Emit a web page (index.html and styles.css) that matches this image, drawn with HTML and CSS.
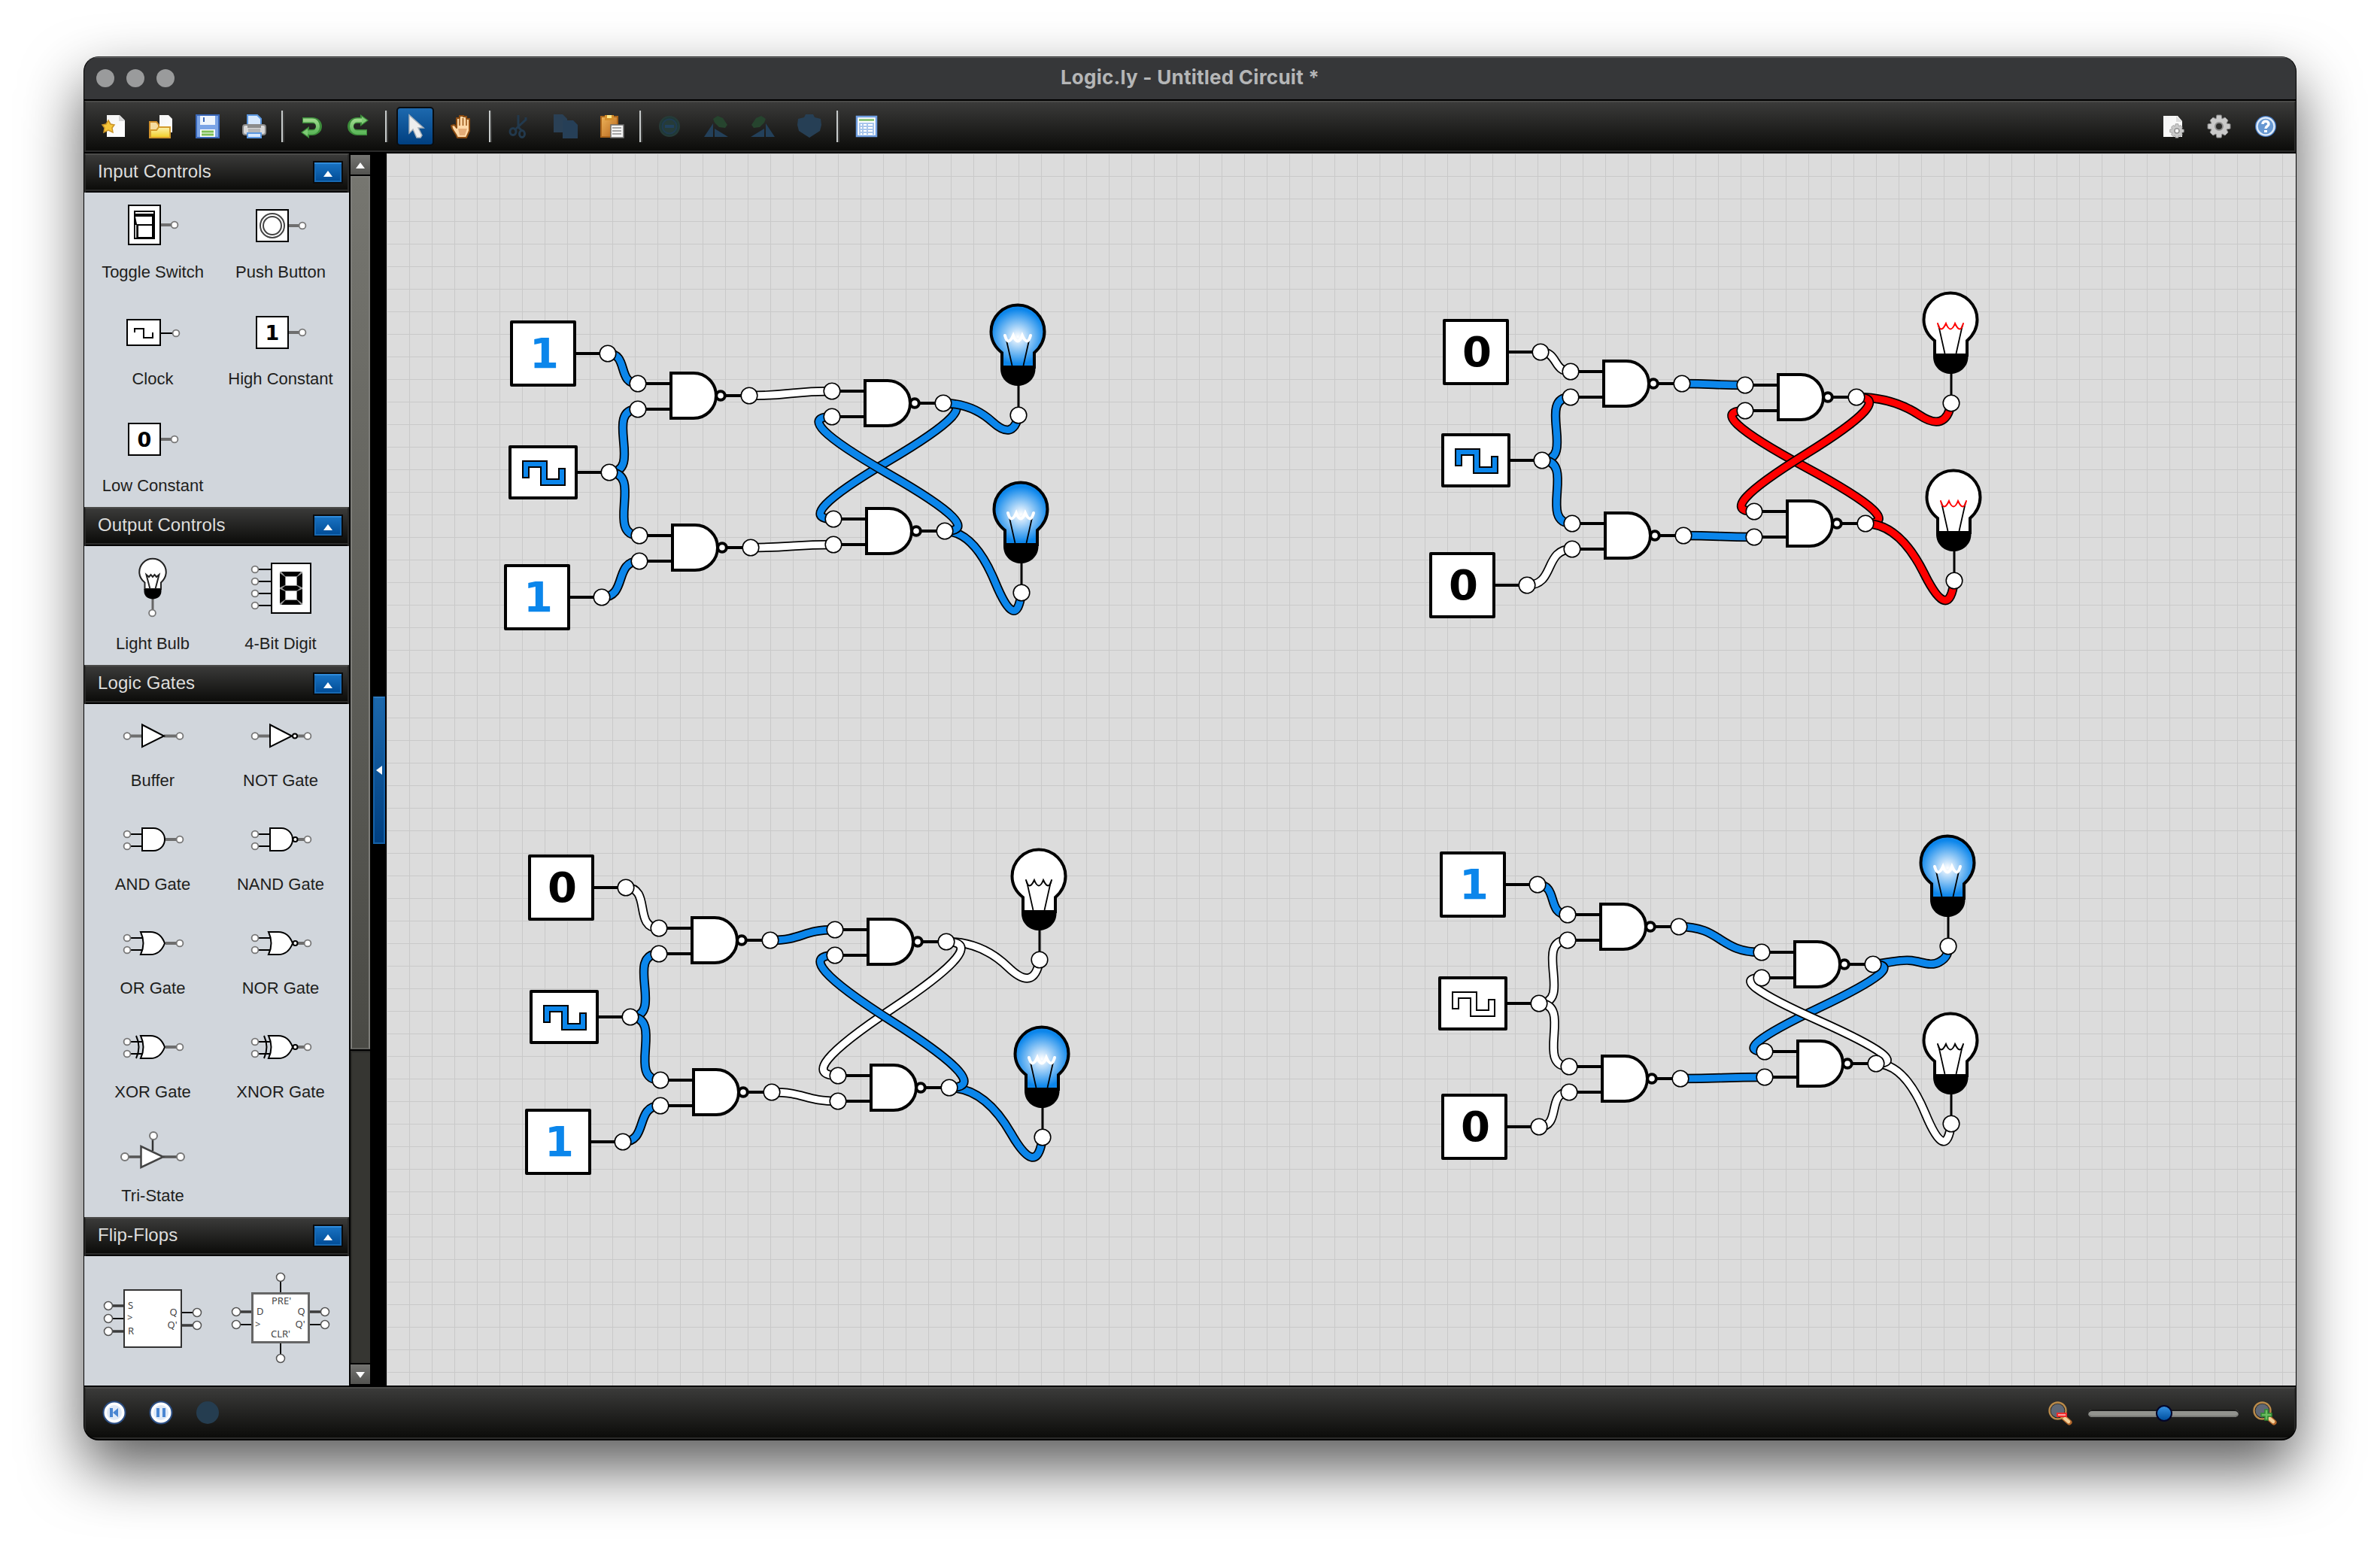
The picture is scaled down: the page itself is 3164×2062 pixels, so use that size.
FILE: index.html
```html
<!DOCTYPE html>
<html lang="en">
<head>
<meta charset="utf-8">
<title>Logic.ly - Untitled Circuit *</title>
<link rel="stylesheet" href="styles.css">
</head>
<body>
<svg class="defs" aria-hidden="true">
  <defs>
    <linearGradient id="gPaper" x1="0" y1="0" x2="1" y2="1"><stop offset="0" stop-color="#f4f4f4"/><stop offset="1" stop-color="#ffffff"/></linearGradient>
    <linearGradient id="gFolder" x1="0" y1="0" x2="0" y2="1"><stop offset="0" stop-color="#fdf3b0"/><stop offset="1" stop-color="#f0cd22"/></linearGradient>
    <linearGradient id="gGreen" x1="0" y1="0" x2="0" y2="1"><stop offset="0" stop-color="#9ad68a"/><stop offset="1" stop-color="#5fb95c"/></linearGradient>
    <linearGradient id="gWood" x1="0" y1="0" x2="1" y2="1"><stop offset="0" stop-color="#eeb45a"/><stop offset="1" stop-color="#b5651c"/></linearGradient>
    <radialGradient id="gLit" gradientUnits="userSpaceOnUse" cx="-1" cy="-104" r="40"><stop offset="0" stop-color="#ffffff"/><stop offset=".12" stop-color="#e4f1fd"/><stop offset=".92" stop-color="#0c86eb"/><stop offset="1" stop-color="#0c86eb"/></radialGradient>
    <symbol id="pin" viewBox="-8 -8 16 16"><circle r="4.4" fill="#fff" stroke="#777" stroke-width="1.8"/></symbol>
    <symbol id="tri-up" viewBox="0 0 12 8"><path d="M6 0L12 8H0Z" fill="#fff"/></symbol>
    <g id="gear">
      <path d="M-3-15H3L4-10L8-12L12-8L10-4L15-3V3L10 4L12 8L8 12L4 10L3 15H-3L-4 10L-8 12L-12 8L-10 4L-15 3V-3L-10-4L-12-8L-8-12L-4-10Z" fill="#c9c9c9" stroke="#858585"/>
      <circle r="5" fill="#2c2c2b" stroke="#8d8d8d" stroke-width="2"/>
    </g>
    <g id="lens">
      <path d="M20 21L28 28" stroke="#b4672b" stroke-width="7" stroke-linecap="round"/><path d="M20 21L27 27" stroke="#f3cf98" stroke-width="4.500" stroke-linecap="round"/>
      <circle cx="12.500" cy="12.500" r="9" fill="#606875"/><circle cx="12.500" cy="12.500" r="11" fill="none" stroke="#b98a4a" stroke-width="2.400"/>
    </g>
  </defs>
</svg>

<div class="window">
  <header class="titlebar">
    <div class="lights"><i></i><i></i><i></i></div>
    <h1>Logic.ly - Untitled Circuit *</h1>
  </header>

  <nav class="bar toolbar">
    <button class="tool"><svg viewBox="0 0 32 32"><path d="M6 1H23L30 8V30H6Z" fill="url(#gPaper)"/><path d="M22 1L30 9H22Z" fill="#d5d5d5"/><path d="M8 8L11 13L16 14L13 18L14 24L8 21L2 24L3 18L0 14L5 13Z" fill="#f5c63a" stroke="#c99327" stroke-width="1.500"/></svg></button>
    <button class="tool"><svg viewBox="0 0 32 32"><path d="M14 1H26L31 6V24H14Z" fill="url(#gPaper)"/><path d="M1 31V10H10L13 14V31Z" fill="#f5dca0" stroke="#cf8f2c" stroke-width="2"/><path d="M2 31V21H10L13 17H28V31Z" fill="url(#gFolder)" stroke="#d29a2c" stroke-width="2"/></svg></button>
    <button class="tool"><svg viewBox="0 0 32 32"><rect x="1" y="1" width="30" height="30" fill="#7ba4e6" stroke="#3a67b8" stroke-width="2"/><rect x="6" y="2" width="20" height="12" fill="#eef4fc"/><path d="M11 4V10" stroke="#3a67b8" stroke-width="2"/><rect x="6" y="20" width="20" height="10" fill="#fff"/><path d="M8 23H24M8 27H24" stroke="#7fbf56" stroke-width="3"/></svg></button>
    <button class="tool"><svg viewBox="0 0 32 32"><path d="M7 15V1H20L25 6V15Z" fill="#d6e8fd" stroke="#5b97e0" stroke-width="2"/><rect x="1" y="14" width="30" height="13" rx="3" fill="#d9d9d9" stroke="#8b8b8b" stroke-width="2"/><rect x="7" y="13" width="18" height="5" fill="#8c8c8c"/><rect x="8" y="19" width="16" height="5" fill="#b5b5b5"/><path d="M7 25H25V31H7Z" fill="#d6e8fd" stroke="#5b97e0" stroke-width="2"/></svg></button>
    <span class="sep"></span>
    <button class="tool"><svg viewBox="0 0 32 32"><path d="M4 8H17C29 8 29 24 17 24H12" fill="none" stroke="#3c8c3a" stroke-width="8"/><path d="M13 16V32L2 24Z" fill="#3c8c3a"/><path d="M5 8H17C27 8 27 24 17 24H9" fill="none" stroke="url(#gGreen)" stroke-width="5"/><path d="M11 19V29L4 24Z" fill="#7ecb75"/></svg></button>
    <button class="tool"><svg viewBox="0 0 32 32"><path d="M28 24H15C3 24 3 8 15 8H20" fill="none" stroke="#3c8c3a" stroke-width="8"/><path d="M19 0V16L30 8Z" fill="#3c8c3a"/><path d="M27 24H15C5 24 5 8 15 8H23" fill="none" stroke="url(#gGreen)" stroke-width="5"/><path d="M21 3V13L28 8Z" fill="#7ecb75"/></svg></button>
    <span class="sep"></span>
    <button class="tool selected"><svg viewBox="0 0 32 32"><path d="M8 1V25L13 20L18 31H23L25 28L20 18H27Z" fill="#eeeeee" stroke="#a9b2ba" stroke-width="1.500"/></svg></button>
    <button class="tool"><svg viewBox="0 0 32 32"><path d="M10 31C8 24 3 22 2 15L6 14L9 18V5H13V2H18V3H22V6H26V22L22 31Z" fill="#ffd9a8" stroke="#8b4c12" stroke-width="2" stroke-linejoin="round"/><path d="M13 6V15M17.500 5V15M22 7V15" stroke="#9a5a1c" stroke-width="1.600"/><path d="M11 19H23L20 28H13Z" fill="#e3ac78"/></svg></button>
    <span class="sep"></span>
    <button class="tool off"><svg viewBox="0 0 32 32"><g fill="none" stroke="#22394d" stroke-width="3"><path d="M15 1V17L20 22M25 4V7L10 21"/><ellipse cx="8" cy="23" rx="4" ry="4.500"/><ellipse cx="20" cy="26" rx="3.500" ry="4.500"/></g></svg></button>
    <button class="tool off"><svg viewBox="0 0 32 32"><path d="M0 0H12L18 6V24H0Z" fill="#2a4055"/><path d="M12 8H26L32 14V32H12Z" fill="#263f57"/></svg></button>
    <button class="tool"><svg viewBox="0 0 32 32"><rect x="1" y="3" width="22" height="27" fill="url(#gWood)" stroke="#a9641b" stroke-width="2"/><rect x="6" y="1" width="12" height="7" fill="#d38f2d"/><rect x="9" y="1" width="6" height="4" fill="#ffe98a"/><rect x="14" y="14" width="17" height="17" fill="#f4f4f4" stroke="#6c6c6c" stroke-width="1.500"/><path d="M16 18H28M16 22H28M16 26H28" stroke="#a5a5a5" stroke-width="2"/></svg></button>
    <span class="sep"></span>
    <button class="tool off"><svg viewBox="0 0 32 32"><circle cx="16" cy="16" r="13" fill="#1f3937" stroke="#263b38" stroke-width="2"/><circle cx="16" cy="16" r="9.500" fill="#263b38" stroke="#203b50" stroke-width="2"/><rect x="10" y="14" width="12" height="4" fill="#21415d"/></svg></button>
    <button class="tool off"><svg viewBox="0 0 32 32"><path d="M12 12V30H0Z M14 19L32 30H14Z" fill="#23405a"/><path d="M12 6L18 2L25 5L31 14L28 18L20 17L14 11Z" fill="#26442e"/></svg></button>
    <button class="tool off"><svg viewBox="0 0 32 32"><path d="M20 12V30H32Z M18 19L0 30H18Z" fill="#23405a"/><path d="M20 6L14 2L7 5L1 14L4 18L12 17L18 11Z" fill="#26442e"/></svg></button>
    <button class="tool off"><svg viewBox="0 0 32 32"><path d="M11 0H21L23 4L31 6L32 14L30 22L16 31L2 22L0 14L1 6L9 4Z" fill="#263f55"/></svg></button>
    <span class="sep"></span>
    <button class="tool"><svg viewBox="0 0 32 32"><rect x="3" y="3" width="26" height="26" fill="#fff" stroke="#6f9ee0" stroke-width="2.500"/><rect x="6" y="6" width="20" height="3" fill="#8cc47c"/><rect x="6" y="11" width="20" height="16" fill="#a9c6ec"/><path d="M8 14H24M8 18H24M8 22H24M8 26H24" stroke="#fff" stroke-width="2"/><path d="M11 11V27M17 11V27" stroke="#a9c6ec" stroke-width="2"/></svg></button>
    <span class="spring"></span>
    <button class="tool"><svg viewBox="0 0 32 32"><path d="M4 2H23L29 9V30H4Z" fill="url(#gPaper)"/><path d="M21 2L29 10H21Z" fill="#dedede"/><g transform="translate(22 22) scale(.62)"><use href="#gear"/><circle r="4" fill="#fff"/></g></svg></button>
    <button class="tool"><svg viewBox="-16 -16 32 32"><use href="#gear"/></svg></button>
    <button class="tool"><svg viewBox="0 0 32 32"><circle cx="16" cy="16" r="14" fill="#3f74bd"/><circle cx="16" cy="16" r="11.500" fill="#6798d2" stroke="#dce9f8" stroke-width="2.500"/><path d="M12 13C12 8 20 8 20 13C20 16 16 15.500 16 19" fill="none" stroke="#fff" stroke-width="3.500"/><rect x="14" y="21" width="4" height="3" fill="#fff"/></svg></button>
  </nav>

  <main class="workspace">
    <aside class="palette">
      <h2 class="section"><span>Input Controls</span><button class="fold"><svg><use href="#tri-up"/></svg></button></h2>
      <div class="parts inputs">
        <figure>
          <svg viewBox="0 0 170 92"><rect x="53" y="17" width="42" height="52" fill="#fff" stroke="#000" stroke-width="2"/><path d="M96 43H111" stroke="#6e6e6e" stroke-width="4"/><use href="#pin" x="106" y="35" width="16" height="16"/><rect x="60" y="24" width="28" height="38"/><path d="M62 27H86" stroke="#fff" stroke-width="2"/><path d="M62 32H84V42H64Z" fill="#fff"/><path d="M66 44H84V59H66Z" fill="#fff"/><path d="M62.500 43V60" stroke="#fff" stroke-width="1.500"/></svg>
          <figcaption>Toggle Switch</figcaption>
        </figure>
        <figure>
          <svg viewBox="0 0 170 92"><rect x="53" y="23" width="42" height="42" fill="#fff" stroke="#000" stroke-width="2"/><path d="M96 44H111" stroke="#6e6e6e" stroke-width="4"/><use href="#pin" x="106" y="36" width="16" height="16"/><circle cx="74" cy="44" r="16" fill="#fff" stroke="#444" stroke-width="2"/><circle cx="74" cy="44" r="12" fill="#fff" stroke="#444" stroke-width="2"/></svg>
          <figcaption>Push Button</figcaption>
        </figure>
        <figure>
          <svg viewBox="0 0 170 92"><rect x="51" y="27" width="44" height="34" fill="#fff" stroke="#000" stroke-width="2"/><path d="M61 44V39H73V51H85V44M96 45H112" fill="none" stroke="#000" stroke-width="2"/><use href="#pin" x="108" y="37" width="16" height="16"/></svg>
          <figcaption>Clock</figcaption>
        </figure>
        <figure>
          <svg viewBox="0 0 170 92"><rect x="53" y="23" width="42" height="42" fill="#fff" stroke="#000" stroke-width="2"/><path d="M96 44H111" stroke="#6e6e6e" stroke-width="4"/><use href="#pin" x="106" y="36" width="16" height="16"/><text class="mini-digit" x="74" y="54">1</text></svg>
          <figcaption>High Constant</figcaption>
        </figure>
        <figure>
          <svg viewBox="0 0 170 92"><rect x="53" y="23" width="42" height="42" fill="#fff" stroke="#000" stroke-width="2"/><path d="M96 44H111" stroke="#6e6e6e" stroke-width="4"/><use href="#pin" x="106" y="36" width="16" height="16"/><text class="mini-digit" x="74" y="54">0</text></svg>
          <figcaption>Low Constant</figcaption>
        </figure>
      </div>

      <h2 class="section"><span>Output Controls</span><button class="fold"><svg><use href="#tri-up"/></svg></button></h2>
      <div class="parts outputs">
        <figure>
          <svg viewBox="0 0 170 116"><path d="M85 70V85" stroke="#666" stroke-width="3"/><use href="#pin" x="76.500" y="81" width="16" height="16"/><g transform="translate(85.500 90) scale(.5)"><path d="M-22-66V-83C-32-91-36.500-101-36.500-111A35.500 35.500 0 0 1 34.500-111C34.500-101 30-91 21-83V-66Z" fill="#fff" stroke="#222" stroke-width="4"/><path d="M-24-66H22V-60C22-46 10-39-1-39C-12-39-24-46-24-60Z"/><path d="M-8-66L-18-104L-11-98L-6-104L-1-98L4-104L9-98L16-104L6-66" fill="none" stroke="#222" stroke-width="4"/></g></svg>
          <figcaption>Light Bulb</figcaption>
        </figure>
        <figure>
          <svg viewBox="0 0 170 116"><path d="M55 31H72M55 47H72M55 63H72M55 79H72" stroke="#000" stroke-width="2"/><rect x="73" y="23" width="52" height="66" fill="#fff" stroke="#000" stroke-width="2"/><use href="#pin" x="43" y="23" width="16" height="16"/><use href="#pin" x="43" y="39" width="16" height="16"/><use href="#pin" x="43" y="55" width="16" height="16"/><use href="#pin" x="43" y="71" width="16" height="16"/><rect x="84" y="34" width="30" height="44" fill="#999"/><path d="M92 41H106V52H92Z M92 60H106V71H92Z" fill="#fff"/><path d="M86 34H112L107 40H91Z M86 78H112L107 72H91Z M87 56L91 53H107L111 56L107 59H91Z M84 36L91 41V52L84 55Z M114 36L107 41V52L114 55Z M84 76L91 71V60L84 57Z M114 76L107 71V60L114 57Z"/></svg>
          <figcaption>4-Bit Digit</figcaption>
        </figure>
      </div>

      <h2 class="section"><span>Logic Gates</span><button class="fold"><svg><use href="#tri-up"/></svg></button></h2>
      <div class="parts gates">
        <figure>
          <svg viewBox="0 0 170 88"><path d="M55 42.500H70M100 42.500H117" stroke="#6e6e6e" stroke-width="4"/><path d="M71 27.500V57L100 42.500Z" fill="#fff" stroke="#000" stroke-width="2"/><use href="#pin" x="43" y="34.500" width="16" height="16"/><use href="#pin" x="113" y="34.500" width="16" height="16"/></svg>
          <figcaption>Buffer</figcaption>
        </figure>
        <figure>
          <svg viewBox="0 0 170 88"><path d="M55 42.500H70M107 42.500H117" stroke="#6e6e6e" stroke-width="4"/><path d="M71 27.500V57L100 42.500Z" fill="#fff" stroke="#000" stroke-width="2"/><circle cx="104" cy="42.500" r="3" fill="#fff" stroke="#000" stroke-width="2"/><use href="#pin" x="43" y="34.500" width="16" height="16"/><use href="#pin" x="113" y="34.500" width="16" height="16"/></svg>
          <figcaption>NOT Gate</figcaption>
        </figure>
        <figure>
          <svg viewBox="0 0 170 88"><path d="M102 42H117" stroke="#6e6e6e" stroke-width="4"/><path d="M55 35H71M55 51H71" stroke="#000" stroke-width="2"/><path d="M71 27H86A15 15 0 0 1 86 57H71Z" fill="#fff" stroke="#000" stroke-width="2"/><use href="#pin" x="43" y="27" width="16" height="16"/><use href="#pin" x="43" y="43" width="16" height="16"/><use href="#pin" x="113" y="34" width="16" height="16"/></svg>
          <figcaption>AND Gate</figcaption>
        </figure>
        <figure>
          <svg viewBox="0 0 170 88"><path d="M107 42H117" stroke="#6e6e6e" stroke-width="4"/><path d="M55 35H71M55 51H71" stroke="#000" stroke-width="2"/><path d="M71 27H86A15 15 0 0 1 86 57H71Z" fill="#fff" stroke="#000" stroke-width="2"/><circle cx="104.500" cy="42" r="3" fill="#fff" stroke="#000" stroke-width="2"/><use href="#pin" x="43" y="27" width="16" height="16"/><use href="#pin" x="43" y="43" width="16" height="16"/><use href="#pin" x="113" y="34" width="16" height="16"/></svg>
          <figcaption>NAND Gate</figcaption>
        </figure>
        <figure>
          <svg viewBox="0 0 170 88"><path d="M102 42H117" stroke="#6e6e6e" stroke-width="4"/><path d="M69 27H82C92 27 98 34 101 42C98 50 92 57 82 57H69Q76 42 69 27Z" fill="#fff" stroke="#000" stroke-width="2"/><path d="M55 35H72M55 51H72" stroke="#000" stroke-width="2"/><use href="#pin" x="43" y="27" width="16" height="16"/><use href="#pin" x="43" y="43" width="16" height="16"/><use href="#pin" x="113" y="34" width="16" height="16"/></svg>
          <figcaption>OR Gate</figcaption>
        </figure>
        <figure>
          <svg viewBox="0 0 170 88"><path d="M107 42H117" stroke="#6e6e6e" stroke-width="4"/><path d="M69 27H82C92 27 98 34 101 42C98 50 92 57 82 57H69Q76 42 69 27Z" fill="#fff" stroke="#000" stroke-width="2"/><circle cx="104.500" cy="42" r="3" fill="#fff" stroke="#000" stroke-width="2"/><path d="M55 35H72M55 51H72" stroke="#000" stroke-width="2"/><use href="#pin" x="43" y="27" width="16" height="16"/><use href="#pin" x="43" y="43" width="16" height="16"/><use href="#pin" x="113" y="34" width="16" height="16"/></svg>
          <figcaption>NOR Gate</figcaption>
        </figure>
        <figure>
          <svg viewBox="0 0 170 88"><path d="M102 42H117" stroke="#6e6e6e" stroke-width="4"/><path d="M69 27H82C92 27 98 34 101 42C98 50 92 57 82 57H69Q76 42 69 27Z" fill="#fff" stroke="#000" stroke-width="2"/><path d="M63 27Q70 42 63 57M55 35H72M55 51H72" fill="none" stroke="#000" stroke-width="2"/><use href="#pin" x="43" y="27" width="16" height="16"/><use href="#pin" x="43" y="43" width="16" height="16"/><use href="#pin" x="113" y="34" width="16" height="16"/></svg>
          <figcaption>XOR Gate</figcaption>
        </figure>
        <figure>
          <svg viewBox="0 0 170 88"><path d="M107 42H117" stroke="#6e6e6e" stroke-width="4"/><path d="M69 27H82C92 27 98 34 101 42C98 50 92 57 82 57H69Q76 42 69 27Z" fill="#fff" stroke="#000" stroke-width="2"/><circle cx="104.500" cy="42" r="3" fill="#fff" stroke="#000" stroke-width="2"/><path d="M63 27Q70 42 63 57M55 35H72M55 51H72" fill="none" stroke="#000" stroke-width="2"/><use href="#pin" x="43" y="27" width="16" height="16"/><use href="#pin" x="43" y="43" width="16" height="16"/><use href="#pin" x="113" y="34" width="16" height="16"/></svg>
          <figcaption>XNOR Gate</figcaption>
        </figure>
        <figure>
          <svg viewBox="0 0 170 88"><path d="M53 50H69M99 50H118" stroke="#555" stroke-width="3.500"/><path d="M85 27V42" stroke="#333" stroke-width="2.500"/><path d="M69.500 36V64L99 50Z" fill="#fff" stroke="#444" stroke-width="2.500"/><g fill="#fff" stroke="#777" stroke-width="2"><circle cx="48" cy="50" r="5"/><circle cx="122" cy="50" r="5"/><circle cx="86" cy="22" r="5"/></g></svg>
          <figcaption>Tri-State</figcaption>
        </figure>
      </div>

      <h2 class="section"><span>Flip-Flops</span><button class="fold"><svg><use href="#tri-up"/></svg></button></h2>
      <div class="parts flops">
        <figure>
          <svg viewBox="0 0 170 172"><path d="M31 66H47M31 100H47M124 92H139" stroke="#3c3c3c" stroke-width="3.500"/><path d="M31 83H47M124 75H139" stroke="#111" stroke-width="2"/><rect x="47" y="45" width="76" height="76" fill="#fff" stroke="#333" stroke-width="2"/><g fill="#fff" stroke="#555" stroke-width="1.500"><circle cx="26" cy="66" r="5.500"/><circle cx="26" cy="83" r="5.500"/><circle cx="26" cy="100" r="5.500"/><circle cx="144" cy="75" r="5.500"/><circle cx="144" cy="92" r="5.500"/></g><g class="pin-text"><text x="52" y="70">S</text><text x="51" y="86">&gt;</text><text x="52" y="104">R</text><text x="107.500" y="79">Q</text><text x="104.500" y="96">Q'</text></g></svg>
        </figure>
        <figure>
          <svg viewBox="0 0 170 172"><path d="M31 74H47M124 74H139" stroke="#3c3c3c" stroke-width="3.500"/><path d="M31 91H47M124 91H139M85 33V49M85 114V131" stroke="#111" stroke-width="2"/><rect x="47.500" y="49.500" width="75" height="65" fill="#fff" stroke="#666" stroke-width="3"/><g fill="#fff" stroke="#555" stroke-width="1.500"><circle cx="26" cy="74" r="5.500"/><circle cx="26" cy="91" r="5.500"/><circle cx="85" cy="28" r="5.500"/><circle cx="85" cy="136" r="5.500"/><circle cx="144" cy="74" r="5.500"/><circle cx="144" cy="91" r="5.500"/></g><g class="pin-text"><text x="73" y="64">PRE'</text><text x="72" y="108">CLR'</text><text x="53" y="78">D</text><text x="51" y="95">&gt;</text><text x="107.500" y="78">Q</text><text x="104.500" y="95">Q'</text></g></svg>
        </figure>
      </div>
    </aside>

    <div class="scrollbar">
      <span class="step"><svg><use href="#tri-up"/></svg></span>
      <span class="thumb"></span>
      <span class="track"></span>
      <span class="step down"><svg><use href="#tri-up"/></svg></span>
    </div>
    <div class="splitter"><span class="grip"><svg viewBox="0 0 8 12"><path d="M8 0V12L0 6Z" fill="#fff"/></svg></span></div>
    <svg class="canvas" viewBox="514 204 2538 1638"></svg>
  </main>

  <footer class="bar status">
    <button class="tool"><svg viewBox="0 0 32 32"><circle cx="16" cy="16" r="14.500" fill="#fff" stroke="#2c4f85" stroke-width="2"/><circle cx="16" cy="16" r="10" fill="#dfe9f7"/><path d="M10 10H14V22H10Z M21 10V22L14 16Z" fill="#4a86d2"/></svg></button>
    <button class="tool"><svg viewBox="0 0 32 32"><circle cx="16" cy="16" r="14.500" fill="#fff" stroke="#2c4f85" stroke-width="2"/><circle cx="16" cy="16" r="10" fill="#dfe9f7"/><path d="M10 10H14V22H10Z M18 10H22V22H18Z" fill="#4a86d2"/></svg></button>
    <button class="tool off"><svg viewBox="0 0 32 32"><circle cx="16" cy="16" r="15" fill="#253d50"/></svg></button>
    <span class="spring"></span>
    <svg class="zoom" viewBox="0 0 32 32"><use href="#lens"/><rect x="11" y="15" width="14" height="6" fill="#ef2b2b"/><path d="M13 18H23" stroke="#ff9d9d" stroke-width="2"/></svg>
    <div class="slider"><i></i></div>
    <svg class="zoom" viewBox="0 0 32 32"><use href="#lens"/><path d="M16 11H20V16H25V20H20V25H16V20H11V16H16Z" fill="#6cbb61" stroke="#2f8a31" stroke-width="1.500"/></svg>
  </footer>
</div>
<script src="script.js"></script>
</body>
</html>
```
FILE: styles.css
```css
* { box-sizing: border-box; }
html, body { margin: 0; height: 100%; }
body {
  padding: 75px 111px 0;
  overflow: hidden;
  background: #fff;
  font-family: "Liberation Sans", Arial, sans-serif;
}
button { padding: 0; border: 0; background: none; }
.defs { position: absolute; width: 0; height: 0; }

.window {
  display: flex;
  flex-direction: column;
  width: 2942px;
  height: 1840px;
  border: 1px solid #000;
  border-top-color: #2a2b2b;
  border-bottom-width: 2px;
  border-radius: 20px;
  overflow: hidden;
  background: #000;
  box-shadow: 0 36px 80px rgba(0, 0, 0, .65);
}

.titlebar {
  display: grid;
  grid-template-columns: 1fr auto 1fr;
  align-items: center;
  height: 56px;
  padding: 0 16px;
  background: #363739;
  box-shadow: inset 0 1px #68696a;
}
.lights { display: flex; gap: 16px; }
.lights i { width: 24px; height: 24px; border-radius: 50%; background: #9a9b9c; }
.titlebar h1 {
  margin: -2px 0 0;
  font: 700 26px/30px Inter, sans-serif;
  letter-spacing: .25px;
  color: #b5b6b7;
}

.bar {
  display: flex;
  align-items: center;
  gap: 12px;
  border: 2px solid #2b2b2a;
  border-top-color: #4b4b49;
  background: linear-gradient(#3a3a39, #0c0c0a);
}
.toolbar { height: 68px; margin: 2px 0; padding: 0 13px; }
.tool {
  display: flex;
  align-items: center;
  justify-content: center;
  width: 50px;
  height: 52px;
}
.tool svg { width: 32px; height: 32px; overflow: visible; }
.tool.selected {
  border: 2px solid #0a0d10;
  border-radius: 5px;
  background: linear-gradient(#1d69ae, #003f80);
}
.sep {
  width: 2px;
  height: 42px;
  margin: 0 1px 0 -1px;
  background: #c7cbcb;
  box-shadow: 2px 0 #3b3b3a;
}
.spring { flex: 1; }

.workspace { display: flex; height: 1638px; }
.palette { width: 352px; overflow: hidden; background: #d1d6dc; }
.section {
  display: flex;
  align-items: center;
  justify-content: space-between;
  height: 52px;
  margin: 0;
  padding: 0 6px 4px 16px;
  border: 2px solid #2b2b2a;
  border-top-color: #4b4b49;
  border-bottom: 0;
  background: linear-gradient(#3a3a39, #0c0c0a 46px);
  box-shadow: inset 0 -2px #000, inset 0 -4px #2b2b2a;
  font-size: 24px;
  font-weight: 400;
  line-height: 28px;
  color: #dededd;
}
.section span { padding-bottom: 2px; letter-spacing: .1px; }
.fold {
  display: flex;
  align-items: center;
  justify-content: center;
  width: 40px;
  height: 30px;
  border: 2px solid #090b0d;
  background: linear-gradient(#1a74c4, #004b95);
  box-shadow: inset 0 2px #2f8bdb, inset 0 0 0 2px #1769b3;
}
.fold svg { width: 12px; height: 8px; margin-top: 3px; }

.parts {
  display: grid;
  grid-template-columns: 170px 170px;
  row-gap: 8px;
  padding-left: 6px;
}
.parts figure { display: flex; flex-direction: column; margin: 0; height: 134px; }
.outputs figure { height: 158px; }
.gates figure { height: 130px; }
.flops figure { height: 172px; }
.parts svg { flex: 1; width: 170px; min-height: 0; }
.parts figcaption {
  height: 42px;
  padding-top: 1px;
  font-size: 22px;
  line-height: 26px;
  text-align: center;
  color: #1e1e1c;
}
.mini-digit { font: 700 27px "DejaVu Sans", sans-serif; text-anchor: middle; }
.pin-text { font: 13px "Noto Sans", sans-serif; fill: #444; }

.scrollbar {
  display: flex;
  flex-direction: column;
  gap: 2px;
  width: 30px;
  padding: 2px;
}
.step {
  display: flex;
  align-items: center;
  justify-content: center;
  height: 26px;
  padding-top: 2px;
  background: linear-gradient(#747471, #535350);
}
.step svg { width: 12px; height: 8px; }
.step.down svg { transform: rotate(180deg); }
.thumb {
  height: 1161px;
  border: 2px solid #7d7d79;
  border-bottom-color: #62625e;
  background: linear-gradient(#767670, #4a4a45);
}
.track { flex: 1; background: #363632; box-shadow: inset 2px 2px #2a2a27; }

.splitter {
  display: flex;
  align-items: center;
  width: 20px;
  padding: 2px 0 0 2px;
}
.grip {
  display: flex;
  align-items: center;
  justify-content: center;
  width: 16px;
  height: 196px;
  border: 2px solid #1562a8;
  border-top-color: #2d7bc0;
  background: linear-gradient(#1c68ac, #003f80);
}
.grip svg { width: 8px; height: 12px; }

.canvas {
  flex: 1;
  height: 1638px;
  background-color: #dcdcdc;
  background-image:
    linear-gradient(90deg, #c9c9c9 1px, transparent 1px),
    linear-gradient(#c9c9c9 1px, transparent 1px);
  background-size: 30px 30px;
}
.wire { fill: none; stroke: #000; stroke-width: 12.4px; }
.wire.core { stroke-width: 9px; }
.lead { fill: none; stroke: #000; stroke-width: 4px; }
.body { fill: #fff; stroke: #000; stroke-width: 4px; stroke-linejoin: round; }
.body.sharp { stroke-linejoin: miter; }
.port { fill: #fff; stroke: #000; stroke-width: 1.6px; }
.digit { font: 700 56px "DejaVu Sans", sans-serif; text-anchor: middle; }

.status { height: 69px; margin-top: 2px; padding: 0 23px 0 13px; }
.status .tool { margin-top: -2px; }
.zoom { width: 32px; height: 32px; }
.slider {
  display: flex;
  align-items: center;
  justify-content: center;
  width: 200px;
  height: 10px;
  margin: 0 7px 0 9px;
  border-radius: 5px;
  background: #92938e;
  box-shadow: inset 0 2px #1b1b1a, inset 0 -2px #7a7b77;
}
.slider i {
  width: 22px;
  height: 22px;
  margin-left: 2px;
  border: 2px solid #030528;
  border-radius: 50%;
  background: linear-gradient(#3590e0, #004f9e);
}
```
FILE: script.js
```js
// Signal colours: high, low and unresolved.
const HIGH = "#0b86eb", LOW = "#ffffff", BAD = "#ff0000";

// Every part is placed by the position of its output (or only) port.
const circuits = [
  {
    consts: [[808, 470, 1], [800, 794, 1]], clock: [810, 628, HIGH],
    gates: [[996, 526], [998, 728], [1254, 536], [1256, 706]],
    bulbs: [[1354, 552, HIGH], [1358, 788, HIGH]],
    mid: [LOW, LOW], order: ["down", "topBulb", "lowBulb", "up"]
  },
  {
    consts: [[2048, 468, 0], [2030, 778, 0]], clock: [2050, 612, HIGH],
    gates: [[2236, 510], [2238, 712], [2468, 528], [2480, 696]],
    bulbs: [[2594, 536, BAD], [2598, 772, BAD]],
    mid: [HIGH, HIGH], order: ["up", "topBulb", "lowBulb", "down"]
  },
  {
    consts: [[832, 1180, 0], [828, 1518, 1]], clock: [838, 1352, HIGH],
    gates: [[1024, 1250], [1026, 1452], [1258, 1252], [1262, 1446]],
    bulbs: [[1382, 1276, LOW], [1386, 1512, HIGH]],
    mid: [HIGH, LOW], order: ["topBulb", "down", "lowBulb", "up"]
  },
  {
    consts: [[2044, 1176, 1], [2046, 1498, 0]], clock: [2046, 1334, LOW],
    gates: [[2232, 1232], [2234, 1434], [2490, 1282], [2494, 1414]],
    bulbs: [[2590, 1258, HIGH], [2594, 1494, LOW]],
    mid: [HIGH, HIGH], order: ["topBulb", "down", "lowBulb", "up"]
  }
];

const port = (x, y) => `<circle class="port" cx="${x}" cy="${y}" r="10.800"/>`;

const cable = (d, color) =>
  `<path class="wire" d="${d}"/><path class="wire core" d="${d}" style="stroke:${color}"/>`;

// Two quadratic arcs that meet halfway between their control points.
const bend = (p0, c1, c2, p1) =>
  `M${p0[0]} ${p0[1]}Q${c1} ${(c1[0] + c2[0]) / 2} ${(c1[1] + c2[1]) / 2}Q${c2} ${p1[0]} ${p1[1]}`;

// Forward run: leaves its source to the right, enters a gate from the left.
function wire([x0, y0], [x1, y1], color) {
  const k = Math.hypot(x1 - x0, y1 - y0) / 2;
  return cable(`M${x0} ${y0}C${x0 + k} ${y0} ${x1 - k} ${y1} ${x1} ${y1}`, color);
}

// Feedback run: the target lies behind the source.
function feedback(p0, p1, color) {
  const k = Math.hypot(p1[0] - p0[0], p1[1] - p0[1]) * .27;
  return cable(bend(p0, [p0[0] + k, p0[1]], [p1[0] - k, p1[1]], p1), color);
}

// Lamp run: comes up into the bulb from below.
function lampWire(p0, p1, color) {
  const dx = p1[0] - p0[0], dy = p1[1] - p0[1];
  if (dy < 0) {
    const [x, y] = p0;
    return cable(`M${x} ${y}C${x + 25} ${y - 2} ${x + 36} ${y - 7} ${x + 51} ${y - 5}S${x + 77} ${y + 3} ${x + 88} ${y - 3}S${p1[0]} ${p1[1] + 8} ${p1[0]} ${p1[1]}`, color);
  }
  return cable(bend(p0, [p0[0] + dx * .38, p0[1]], [p1[0] - 7, p1[1] + dx * .294 + dy * .29], p1), color);
}

const input = ([x, y], n) => [x - 148, y + (n ? 18 : -16)];

function constant([x, y, v]) {
  return `<g transform="translate(${x} ${y})"><path class="lead" d="M-44 0H-8"/>
    <rect class="body" x="-128" y="-42" width="84" height="84"/>
    <text class="digit" x="-84.500" y="18.500" fill="${v ? HIGH : "#000"}">${v}</text>${port(0, 0)}</g>`;
}

function clock([x, y, color]) {
  return `<g transform="translate(${x} ${y})"><path class="lead" d="M-44 0H-8"/>
    <rect class="body" x="-132" y="-34" width="88" height="68"/>
    <path d="M-115-15H-83V9H-67V-5H-59V17H-91V-7H-107V7H-115Z" fill="${color}" stroke="#000" stroke-width="2"/>${port(0, 0)}</g>`;
}

function nand([x, y]) {
  return `<g transform="translate(${x} ${y})"><path class="lead" d="M-148-16H-104M-148 18H-104M-34 0H-8"/>
    <path class="body sharp" d="M-104-30H-74A30 30 0 0 1-74 30H-104Z"/>
    <circle class="body" cx="-38" cy="0" r="5.800"/>${port(-148, -16)}${port(-148, 18)}${port(0, 0)}</g>`;
}

function bulb([x, y, color]) {
  const lit = color === HIGH;
  const filament = lit ? "#fff" : color === BAD ? BAD : "#000";
  return `<g transform="translate(${x} ${y})"><path d="M0-42V-8" stroke="#000" stroke-width="3"/>
    <path d="M-22-64V-83C-32-91-36.500-101-36.500-111A35.500 35.500 0 0 1 34.500-111C34.500-101 30-91 21-83V-64Z" fill="${lit ? "url(#gLit)" : "#fff"}" stroke="#000" stroke-width="4"/>
    <path d="M-24-66H22.500V-62C22.500-47 10-39-1-39C-12-39-24-47-24-62Z"/>
    <path d="M-17-104L-8.500-66M15-104L6.500-66" stroke="#000" stroke-width="1.800"/>
    <path d="M-18-106Q-14-91-7-106Q-1-91 5-106Q12-91 16-106" fill="none" stroke="${filament}" stroke-width="${lit ? 4 : 2}" stroke-linecap="round"/>${port(0, 0)}</g>`;
}

function draw(c) {
  const [a, b, q, nq] = c.gates;
  const level = v => (v ? HIGH : LOW);
  const latch = {
    down: feedback(q, input(nq, 0), c.bulbs[0][2]),
    up: feedback(nq, input(q, 1), c.bulbs[1][2]),
    topBulb: lampWire(q, c.bulbs[0], c.bulbs[0][2]),
    lowBulb: lampWire(nq, c.bulbs[1], c.bulbs[1][2])
  };
  return [
    wire(c.consts[0], input(a, 0), level(c.consts[0][2])),
    wire(c.consts[1], input(b, 1), level(c.consts[1][2])),
    wire(c.clock, input(a, 1), c.clock[2]),
    wire(c.clock, input(b, 0), c.clock[2]),
    wire(a, input(q, 0), c.mid[0]),
    wire(b, input(nq, 1), c.mid[1]),
    ...c.order.map(name => latch[name]),
    ...c.consts.map(constant), clock(c.clock), ...c.gates.map(nand), ...c.bulbs.map(bulb)
  ].join("");
}

document.querySelector(".canvas").innerHTML = circuits.map(draw).join("");
```
